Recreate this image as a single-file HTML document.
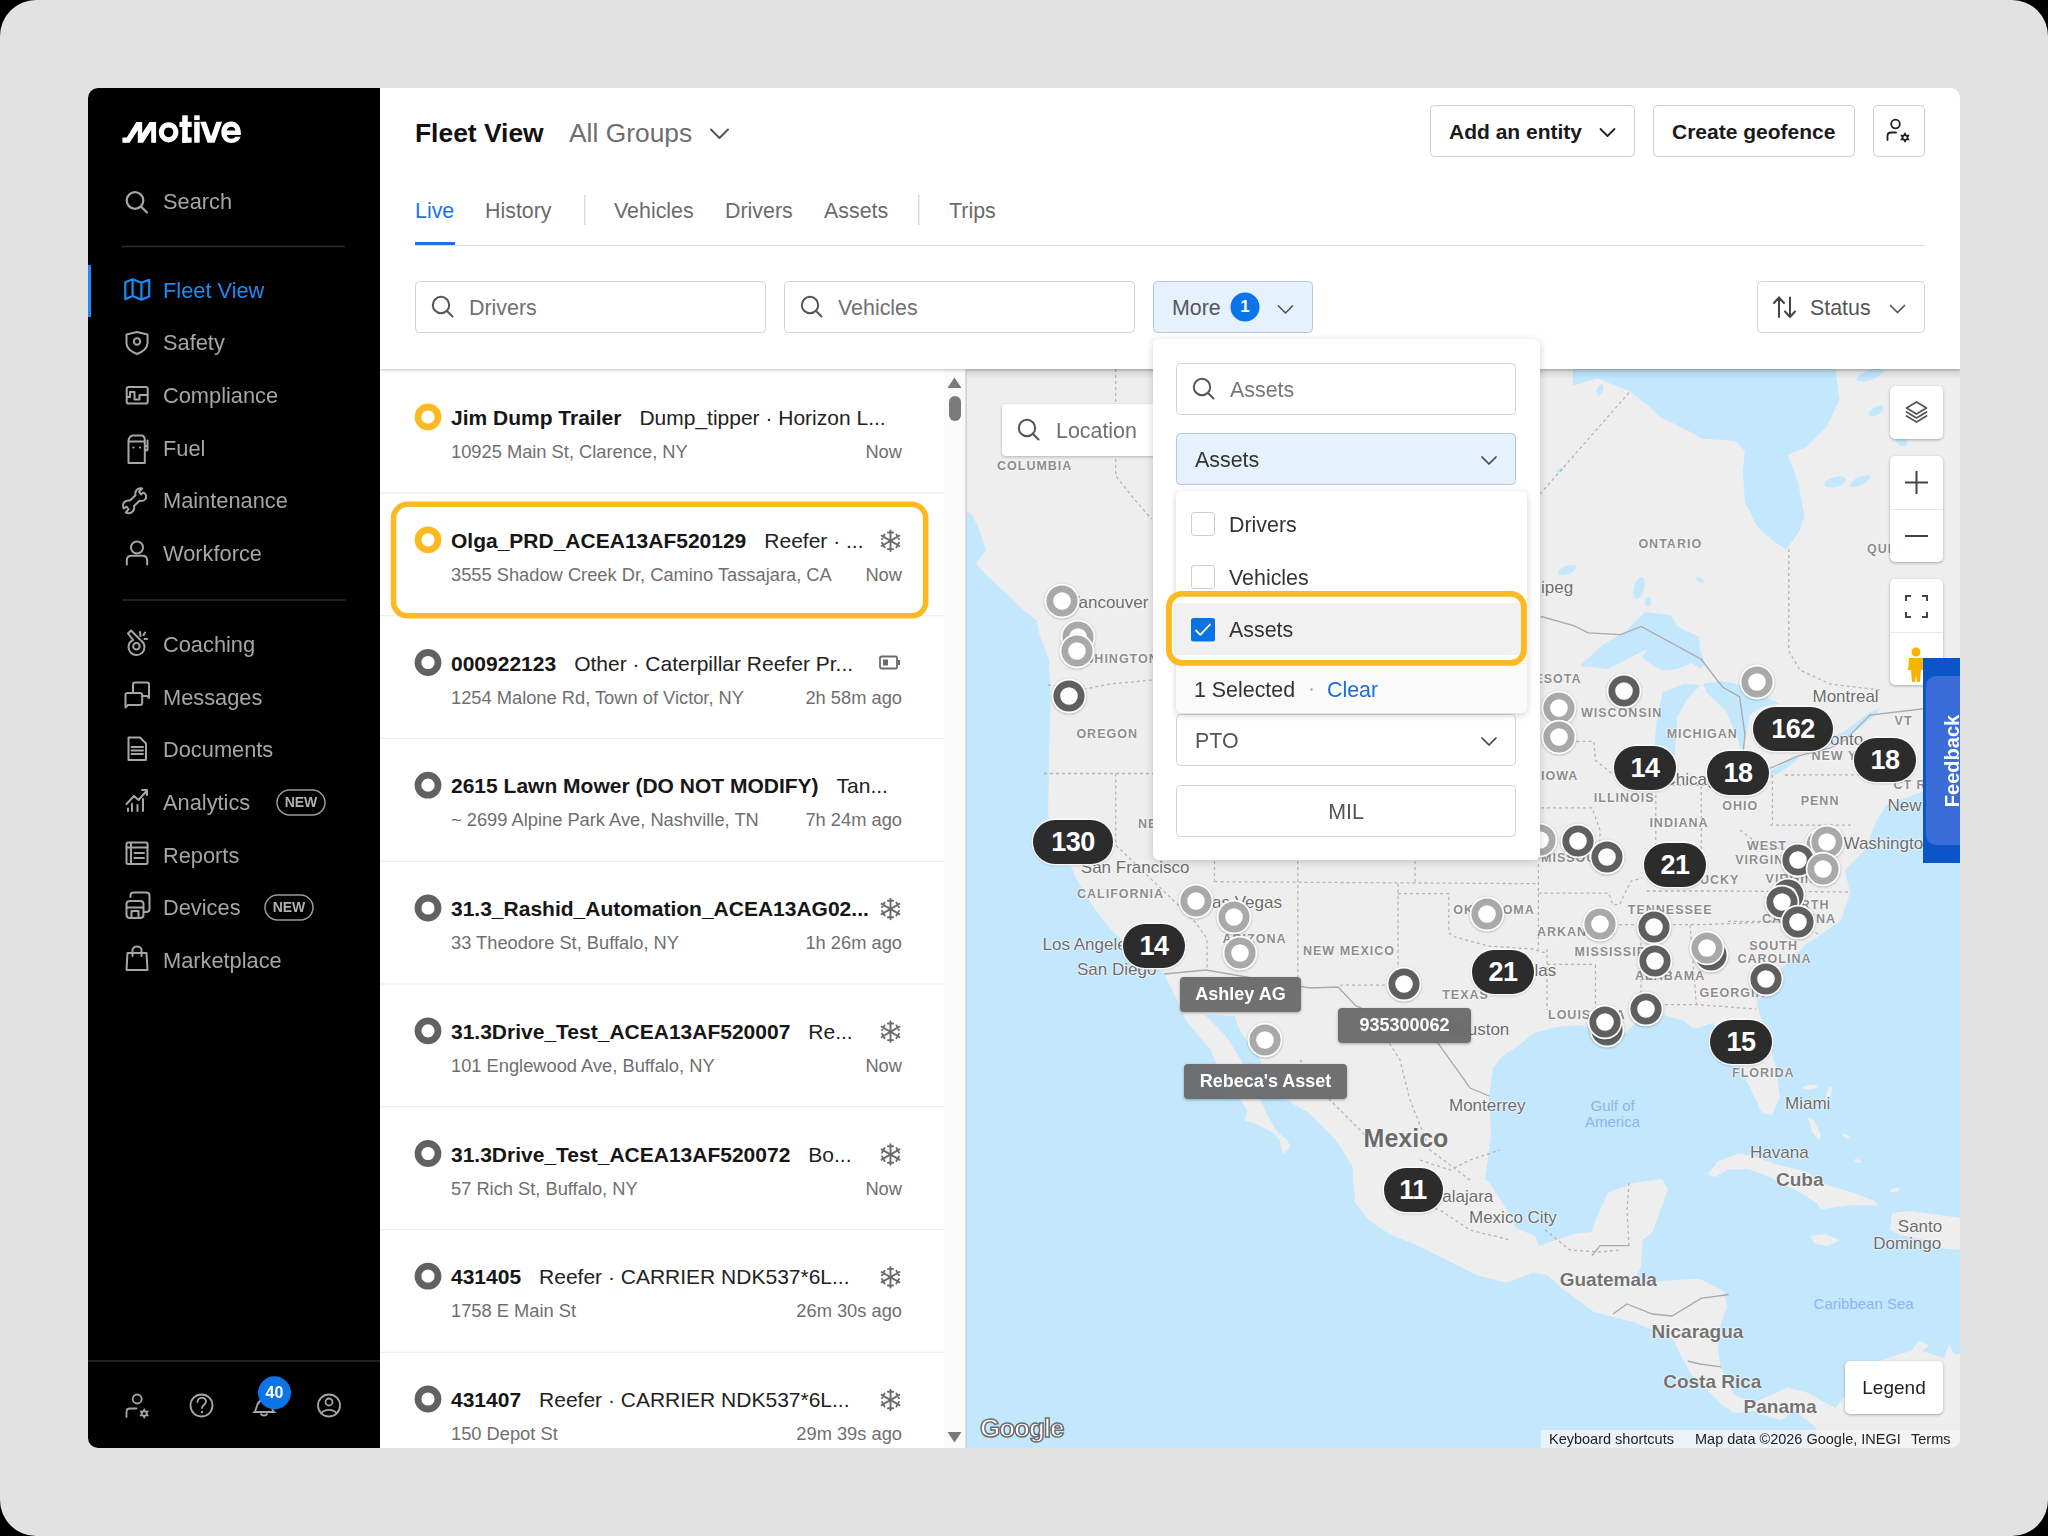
<!DOCTYPE html>
<html><head><meta charset="utf-8"><title>Fleet View</title>
<style>
html,body{margin:0;padding:0;width:2048px;height:1536px;overflow:hidden;background:#000;font-family:"Liberation Sans",sans-serif;}
.abs{position:absolute;}
#outer{position:absolute;left:0;top:0;width:2048px;height:1536px;background:#e2e2e2;border-radius:36px;}
#win{position:absolute;left:0;top:0;width:2048px;height:1536px;clip-path:inset(88px 88px 88px 88px round 10px);}
.navt{font-size:21.8px;color:#a6a6a6;line-height:28px;white-space:nowrap;}
.navt.act{color:#1a8cf5;}
.newb{height:25px;text-align:center;font:bold 14px "Liberation Sans",sans-serif;line-height:25px;color:#b0b0b0;}
.badge40{left:258px;top:1380px;width:33px;text-align:center;font:bold 16px "Liberation Sans",sans-serif;color:#fff;line-height:26px;}
.t26b{font:bold 26.4px "Liberation Sans",sans-serif;color:#111;line-height:34px;white-space:nowrap;}
.t26{font:26.4px "Liberation Sans",sans-serif;line-height:34px;white-space:nowrap;}
.t20{font:21.4px "Liberation Sans",sans-serif;line-height:26px;white-space:nowrap;}
.t20b{font:bold 21px "Liberation Sans",sans-serif;color:#1a1a1a;line-height:26px;white-space:nowrap;}
.ltitle{z-index:3;font:bold 21px "Liberation Sans",sans-serif;color:#161616;line-height:26px;white-space:nowrap;}
.lsub{font-weight:normal;color:#222;margin-left:18px;}
.laddr{z-index:3;font:18.3px "Liberation Sans",sans-serif;color:#6f6f6f;line-height:24px;white-space:nowrap;}
.ml{white-space:nowrap;color:#6e6e6e;text-shadow:0 0 2px #fff,0 0 2px #fff,0 0 1px #fff;}
.ml.st{font:bold 12.5px "Liberation Sans",sans-serif;line-height:1;letter-spacing:1px;color:#8c8c8c;}
.ml.ct{font:17px "Liberation Sans",sans-serif;line-height:1;color:#6b6b6b;}
.ml.ct2{font:bold 19px "Liberation Sans",sans-serif;line-height:1;color:#737373;}
.ml.big{font:bold 25px "Liberation Sans",sans-serif;line-height:1;color:#6a6a6a;}
.ml.wt{font:15px "Liberation Sans",sans-serif;line-height:1;color:#8fb3ee;text-shadow:none;}
.clus{height:44px;border-radius:22px;background:#2c2c2c;color:#fff;text-align:center;font:bold 27px "Liberation Sans",sans-serif;line-height:44px;box-shadow:0 0 0 1.5px rgba(255,255,255,0.9),0 1px 3px rgba(0,0,0,0.4);letter-spacing:-0.5px;}
.mctl{background:#fff;border-radius:5px;box-shadow:0 1px 3px rgba(0,0,0,0.3);z-index:10;}
.tip{height:35px;border-radius:4px;background:rgba(95,95,95,0.88);backdrop-filter:blur(6px);-webkit-backdrop-filter:blur(6px);color:#fff;text-align:center;font:bold 18px "Liberation Sans",sans-serif;line-height:35px;z-index:9;box-shadow:0 1px 3px rgba(0,0,0,0.3);}
.attr{font:14.5px "Liberation Sans",sans-serif;color:#222;line-height:18px;z-index:12;white-space:nowrap;}

</style></head>
<body>
<div id="outer"></div>
<div id="win">
<div class="abs" style="left:88px;top:88px;width:1872px;height:1360px;background:#fff"></div>
<div class="abs" style="left:88px;top:88px;width:292px;height:1360px;background:#000;z-index:30"></div>
<div class="abs" style="left:0;top:0;width:2048px;height:1536px;z-index:31">
<!-- SIDEBAR -->
<div id="sb">
  <svg class="abs" style="left:88px;top:88px" width="292" height="1360" viewBox="88 88 292 1360">
    <!-- logo -->
    <g fill="#fff">
      <path d="M122.4 137.6 L126.8 137.6 L136.3 122 L142.2 122 L142.2 133.3 L149.5 122 L156.1 122 L156.1 142.8 L151.2 142.8 L151.2 130 L143.1 142.8 L137.8 142.8 L137.8 130.2 L129.5 142.8 L122.4 142.8 Z"/>
      <path fill-rule="evenodd" d="M168.6 122.2 a9.8 10.1 0 1 0 0.01 0 Z M168.6 127.4 a4.7 4.9 0 1 1 -0.01 0 Z"/>
      <rect x="182.2" y="115.3" width="5.6" height="27.4"/>
      <rect x="179.4" y="121.8" width="12.3" height="5.2"/>
      <rect x="182.2" y="137.4" width="9.5" height="5.3"/>
      <rect x="194.2" y="115.3" width="5.5" height="4.8"/>
      <rect x="194.2" y="121.8" width="5.5" height="20.9"/>
      <path d="M200.1 121.8 L206 121.8 L211.1 136.4 L216.2 121.8 L222.1 121.8 L214.6 142.7 L207.6 142.7 Z"/>
      <path d="M240.9 133.8 C240.9 126.3 237 121.6 231.2 121.6 C225.4 121.6 221.3 126.3 221.3 132.3 C221.3 138.5 225.5 143 231.4 143 C236 143 239.4 140.6 240.6 136.8 L235.3 136.8 C234.5 138.2 233.2 138.7 231.5 138.7 C229 138.7 227.1 137.2 226.7 134.9 L240.8 134.9 Z M226.8 130.6 C227.3 128.3 229 126.7 231.2 126.7 C233.5 126.7 235.1 128.2 235.5 130.6 Z"/>
    </g>
    <!-- search -->
    <g fill="none" stroke="#a6a6a6" stroke-width="2.2" stroke-linecap="round">
      <circle cx="135" cy="200.5" r="8.3"/>
      <path d="M141 206.5 L147 212.5"/>
    </g>
    <line x1="122" y1="246.5" x2="345" y2="246.5" stroke="#2e2e2e" stroke-width="1.5"/>
    <rect x="88" y="265" width="3" height="52" fill="#1a8cf5"/>
    <!-- fleet view map icon -->
    <g fill="none" stroke="#1a8cf5" stroke-width="2.2" stroke-linejoin="round">
      <path d="M125.3 282.2 L132.6 279.3 L141.4 282.7 L149.2 279.8 L149.2 296.4 L141.4 299.8 L132.6 295.9 L125.3 299.3 Z M132.6 279.3 L132.6 295.9 M141.4 282.7 L141.4 299.8"/>
    </g>
    <g fill="none" stroke="#a6a6a6" stroke-width="2" stroke-linejoin="round" stroke-linecap="round">
      <!-- safety -->
      <path d="M137 332 L126.5 334.5 L126.5 343.2 C126.5 348 131 351.5 137 354 C143 351.5 147.5 348 147.5 343.2 L147.5 334.5 Z"/>
      <circle cx="137" cy="341.5" r="3.2"/>
      <!-- compliance -->
      <rect x="126.7" y="387" width="21" height="16.5" rx="1.8"/>
      <path d="M127 397 L130 397 L130 392 L134.5 392 L134.5 399.5 L139.5 399.5 L139.5 395 L147.5 395"/>
      <!-- fuel -->
      <path d="M128.5 463 L128.5 441 C128.5 439 130 435.5 133 435.5 L141 435.5 C143.5 435.5 144.8 437.5 144.8 440 L144.8 463 Z M128.5 441.5 L144.8 441.5 M144.8 446 L147.5 446 L147.5 440.5 M147.5 446 L147.5 450 L144.8 451"/>
      <!-- maintenance wrench -->
      <path d="M142.3 488.5 L139 491.5 L141 494.5 L143.5 492.5 C146 494 147 497 145.5 499 C144 501 141 501 139.5 500.8 L134 506 C134.5 508 133.5 511 131.5 512.5 C129.5 513.5 127 513 125.8 512.5 L128.5 509.3 L126.5 506.5 L123.8 508.5 C122.5 506.5 123 503.5 124.5 502 C126 500.5 128.5 500.3 130 500.5 L135.5 495.3 C135 493.3 135.8 490.5 137.8 489 C139.3 488 141.3 488.2 142.3 488.5 Z"/>
      <!-- workforce -->
      <circle cx="137" cy="547.5" r="6"/>
      <path d="M126.8 564.5 L126.8 560.5 C126.8 557.5 128.8 555.8 131.5 555.8 L142.5 555.8 C145.3 555.8 147.2 557.5 147.2 560.5 L147.2 564.5"/>
      <!-- coaching whistle -->
      <path d="M128 633.5 L131 630.5 L141 640.5 C143.5 642.5 144.5 645 144.5 647 C144.5 652 140.5 655 136.5 655 C132 655 128.5 651.5 128.5 647 C128.5 644 130 641.5 133.2 640 Z"/>
      <circle cx="136.4" cy="646.2" r="3.3"/>
      <path d="M140 632 L140.5 636 M143.5 635 L145 632.5 M144.5 639 L147 639"/>
      <!-- messages -->
      <path d="M133 693 L133 684.5 C133 683.5 133.8 682.5 135 682.5 L147 682.5 C148.2 682.5 149 683.5 149 684.5 L149 698 L147 696 L142 696"/>
      <path d="M125.5 707.5 L125.5 695 C125.5 693.7 126.3 693 127.5 693 L140 693 C141.3 693 142.2 694 142.2 695 L142.2 703 C142.2 704.3 141.3 705 140 705 L128 705 Z"/>
      <!-- documents -->
      <path d="M128.5 737.5 L140 737.5 L146 743.5 L146 760 L128.5 760 Z M131.5 747 L143 747 M131.5 750.5 L143 750.5 M131.5 754 L143 754"/>
      <!-- analytics -->
      <path d="M126.5 804 L134 796 L138.5 800 L147 790.5 M142 790 L147 790 L147 795 M128 808.5 L128 811 M132 804 L132 811 M137.5 805 L137.5 811 M143 799 L143 811"/>
      <!-- reports -->
      <rect x="126.5" y="842.5" width="21" height="21.5" rx="1.5"/>
      <path d="M126.5 847.5 L147.5 847.5 M131 842.5 L131 864 M134.5 853 L144 853 M134.5 858 L144 858"/>
      <!-- devices -->
      <path d="M130.5 897 L130.5 895.5 C130.5 893.5 131.5 892.5 133.5 892.5 L146 892.5 C148 892.5 149.5 893.5 149.5 895.5 L149.5 909 C149.5 911 148 912 146 912 L144 912"/>
      <path d="M126.5 904 C126.5 902 128 901 130 901 L140 901 C142 901 143.5 902 143.5 904 L143.5 915 C143.5 917 142 918 140 918 L130 918 C128 918 126.5 917 126.5 915 Z M126.5 907.5 L143.5 907.5 M131.5 911 L138.5 911 L138.5 918 L131.5 918 Z"/>
      <!-- marketplace bag -->
      <path d="M127.5 953 L146.5 953 L147.5 970 L126.5 970 Z M132.5 956 L132.5 950 C132.5 948 134.5 946.5 137 946.5 C139.5 946.5 141.5 948 141.5 950 L141.5 956"/>
    </g>
    <line x1="122" y1="600" x2="345" y2="600" stroke="#2e2e2e" stroke-width="1.5"/>
    <!-- NEW badges -->
    <rect x="277" y="790" width="48" height="25" rx="12.5" fill="none" stroke="#9a9a9a" stroke-width="1.5"/>
    <rect x="265" y="895" width="48" height="25" rx="12.5" fill="none" stroke="#9a9a9a" stroke-width="1.5"/>
    <line x1="88" y1="1361" x2="380" y2="1361" stroke="#2e2e2e" stroke-width="1.5"/>
    <!-- bottom icons -->
    <g fill="none" stroke="#a6a6a6" stroke-width="1.8" stroke-linecap="round">
      <circle cx="137.2" cy="1399" r="4.5"/>
      <path d="M126.5 1417 L126.5 1412 C126.5 1410 127.5 1408.5 130 1408.5 L136.5 1408.5"/>

      <circle cx="201.5" cy="1405.5" r="11"/>
      <path d="M197.5 1402 C197.5 1399.5 199.5 1397.8 201.8 1397.8 C204.3 1397.8 206 1399.5 206 1401.7 C206 1404.5 202 1405 202 1408"/>
      <circle cx="329" cy="1405.5" r="11"/>
      <circle cx="329" cy="1402" r="3.5"/>
      <path d="M321.5 1413 C323.5 1410.5 326 1409.8 329 1409.8 C332 1409.8 334.5 1410.5 336.5 1413"/>
      <path d="M254.5 1412 C257 1410 256 1400 264 1399 C272 1400 271 1410 274 1412 Z M261 1414 C262 1416 266 1416 267 1414"/>
    </g>
    <circle cx="202" cy="1412" r="1.2" fill="#a6a6a6"/>
    <g transform="translate(144.2,1413.5)" fill="#a6a6a6">
      <path d="M0 -5.5 L1.6 -2.8 L4.8 -2.8 L3.2 0 L4.8 2.8 L1.6 2.8 L0 5.5 L-1.6 2.8 L-4.8 2.8 L-3.2 0 L-4.8 -2.8 L-1.6 -2.8 Z"/>
      <circle cx="0" cy="0" r="1.5" fill="#000"/>
    </g>
    <circle cx="133.4" cy="447.5" r="1.1" fill="#a6a6a6"/><circle cx="140" cy="447.5" r="1.1" fill="#a6a6a6"/>
    <circle cx="274.5" cy="1392.8" r="16.5" fill="#0a74e8"/>
  </svg>
  <div class="abs logo" style="display:none"></div>
  <div class="abs navt" style="left:163px;top:188px;">Search</div>
  <div class="abs navt act" style="left:163px;top:277px;">Fleet View</div>
  <div class="abs navt" style="left:163px;top:329px;">Safety</div>
  <div class="abs navt" style="left:163px;top:382px;">Compliance</div>
  <div class="abs navt" style="left:163px;top:435px;">Fuel</div>
  <div class="abs navt" style="left:163px;top:487px;">Maintenance</div>
  <div class="abs navt" style="left:163px;top:540px;">Workforce</div>
  <div class="abs navt" style="left:163px;top:631px;">Coaching</div>
  <div class="abs navt" style="left:163px;top:684px;">Messages</div>
  <div class="abs navt" style="left:163px;top:736px;">Documents</div>
  <div class="abs navt" style="left:163px;top:789px;">Analytics</div>
  <div class="abs navt" style="left:163px;top:842px;">Reports</div>
  <div class="abs navt" style="left:163px;top:894px;">Devices</div>
  <div class="abs navt" style="left:163px;top:947px;">Marketplace</div>
  <div class="abs newb" style="left:277px;top:790px;width:48px;">NEW</div>
  <div class="abs newb" style="left:265px;top:895px;width:48px;">NEW</div>
  <div class="abs badge40">40</div>
</div>

</div>
<!-- MAIN HEADER -->
<div class="abs" style="left:380px;top:88px;width:1580px;height:281px;background:#fff;z-index:5;box-shadow:0 1px 3px rgba(0,0,0,0.25);"></div>
<div class="abs" style="left:380px;top:88px;width:1580px;height:281px;z-index:6;">
</div>
<div class="abs t26b" style="left:415px;top:116px;z-index:7;">Fleet View</div>
<div class="abs t26" style="left:569px;top:116px;z-index:7;color:#6e6e6e;">All Groups</div>
<svg class="abs" style="left:0;top:0;z-index:7" width="2048" height="380" viewBox="0 0 2048 380">

  <!-- tabs -->
  <rect x="415" y="242" width="40" height="3" fill="#1a73e8"/>
  <rect x="415" y="245" width="1510" height="1" fill="#dedede"/>
  <rect x="584" y="195" width="1.5" height="30" fill="#dcdcdc"/>
  <rect x="918" y="195" width="1.5" height="30" fill="#dcdcdc"/>
  <!-- buttons -->
  <rect x="1430.5" y="105.5" width="204" height="51" rx="4" fill="#fff" stroke="#cfcfcf"/>
  <rect x="1653.5" y="105.5" width="201" height="51" rx="4" fill="#fff" stroke="#cfcfcf"/>
  <rect x="1873.5" y="105.5" width="51" height="51" rx="4" fill="#fff" stroke="#cfcfcf"/>
  <g fill="none" stroke="#222" stroke-width="1.8" stroke-linecap="round">
    <circle cx="1895.5" cy="124" r="4.3"/>
    <path d="M1887.5 140 L1887.5 136 C1887.5 134 1889 132.5 1891 132.5 L1896 132.5"/>
  </g>
  <g transform="translate(1905,137.5)" fill="#222">
    <path d="M0 -5.5 L1.6 -2.8 L4.8 -2.8 L3.2 0 L4.8 2.8 L1.6 2.8 L0 5.5 L-1.6 2.8 L-4.8 2.8 L-3.2 0 L-4.8 -2.8 L-1.6 -2.8 Z"/>
    <circle cx="0" cy="0" r="1.5" fill="#fff"/>
  </g>
  <!-- inputs -->
  <rect x="415.5" y="281.5" width="350" height="51" rx="4" fill="#fff" stroke="#d2d2d2"/>
  <rect x="784.5" y="281.5" width="350" height="51" rx="4" fill="#fff" stroke="#d2d2d2"/>
  <rect x="1153.5" y="281.5" width="159" height="51" rx="4" fill="#e5f2fd" stroke="#b4c6d8"/>
  <rect x="1757.5" y="281.5" width="167" height="51" rx="4" fill="#fff" stroke="#d2d2d2"/>
  <g fill="none" stroke="#555" stroke-width="2" stroke-linecap="round">
    <circle cx="441" cy="305" r="8.2"/><path d="M447 311 L452.5 316.5"/>
    <circle cx="810" cy="305" r="8.2"/><path d="M816 311 L821.5 316.5"/>
    <path d="M1779 298 L1779 317 M1774 303 L1779 297.5 L1784 303 M1790 297.5 L1790 317 M1785 311.5 L1790 317 L1795 311.5" stroke="#444"/>
  </g>
  <circle cx="1245" cy="307" r="14.5" fill="#0a74e8"/>
  <g fill="none" stroke="#555" stroke-width="2" stroke-linecap="round" stroke-linejoin="round">
    <path d="M711 129.5 L719.5 138 L728 129.5"/>
    <path d="M1600.5 129 L1607.5 136 L1614.5 129" stroke="#222" stroke-width="1.8"/>
    <path d="M1278.5 306 L1285.5 313 L1292.5 306" stroke="#555" stroke-width="1.7"/>
    <path d="M1890.5 305.5 L1897.5 312.5 L1904.5 305.5" stroke="#555" stroke-width="1.7"/>
  </g>
</svg>
<div class="abs t20" style="left:415px;top:198px;color:#1a73e8;z-index:7">Live</div>
<div class="abs t20" style="left:485px;top:198px;color:#6b6b6b;z-index:7">History</div>
<div class="abs t20" style="left:614px;top:198px;color:#6b6b6b;z-index:7">Vehicles</div>
<div class="abs t20" style="left:725px;top:198px;color:#6b6b6b;z-index:7">Drivers</div>
<div class="abs t20" style="left:824px;top:198px;color:#6b6b6b;z-index:7">Assets</div>
<div class="abs t20" style="left:949px;top:198px;color:#6b6b6b;z-index:7">Trips</div>
<div class="abs t20b" style="left:1449px;top:119px;z-index:7">Add an entity</div>
<div class="abs t20b" style="left:1672px;top:119px;z-index:7">Create geofence</div>
<div class="abs t20" style="left:469px;top:295px;color:#707070;z-index:7">Drivers</div>
<div class="abs t20" style="left:838px;top:295px;color:#707070;z-index:7">Vehicles</div>
<div class="abs t20" style="left:1172px;top:295px;color:#555;z-index:7">More</div>
<div class="abs" style="left:1230px;top:297px;width:30px;text-align:center;font:bold 17px 'Liberation Sans',sans-serif;line-height:20px;color:#fff;z-index:8">1</div>
<div class="abs t20" style="left:1810px;top:295px;color:#555;z-index:7">Status</div>

<div class="abs" style="left:380px;top:369px;width:586px;height:1079px;background:#fff;z-index:1"></div>
<svg class="abs" style="left:0;top:0;z-index:2" width="2048" height="1536" viewBox="0 0 2048 1536">
<circle cx="428" cy="417.0" r="10" fill="none" stroke="#fdb921" stroke-width="6.8"/>
<rect x="380" y="492.5" width="564" height="1" fill="#ececec"/>
<circle cx="428" cy="539.8" r="10" fill="none" stroke="#fdb921" stroke-width="6.8"/>
<rect x="380" y="615.2" width="564" height="1" fill="#ececec"/>
<g transform="translate(890.5,540.8)" fill="none" stroke="#6b6b6b" stroke-width="1.9" stroke-linecap="round"><g transform="rotate(0)"><path d="M0 -10.3 L0 10.3 M-2.6 -8.3 L2.6 -8.3 M-2.6 8.3 L2.6 8.3"/></g><g transform="rotate(60)"><path d="M0 -10.3 L0 10.3 M-2.6 -8.3 L2.6 -8.3 M-2.6 8.3 L2.6 8.3"/></g><g transform="rotate(120)"><path d="M0 -10.3 L0 10.3 M-2.6 -8.3 L2.6 -8.3 M-2.6 8.3 L2.6 8.3"/></g><circle r="1.8" fill="#6b6b6b" stroke="none"/></g>
<circle cx="428" cy="662.5" r="10" fill="none" stroke="#616161" stroke-width="6.8"/>
<rect x="380" y="738.0" width="564" height="1" fill="#ececec"/>
<g transform="translate(889,662.5)"><rect x="-9" y="-6" width="17" height="12" rx="1.5" fill="none" stroke="#6a6a6a" stroke-width="1.8"/><rect x="-6" y="-3" width="5" height="6" fill="#6a6a6a"/><rect x="9" y="-2.5" width="2" height="5" fill="#6a6a6a"/></g>
<circle cx="428" cy="785.2" r="10" fill="none" stroke="#616161" stroke-width="6.8"/>
<rect x="380" y="860.8" width="564" height="1" fill="#ececec"/>
<circle cx="428" cy="908.0" r="10" fill="none" stroke="#616161" stroke-width="6.8"/>
<rect x="380" y="983.5" width="564" height="1" fill="#ececec"/>
<g transform="translate(890.5,909.0)" fill="none" stroke="#6b6b6b" stroke-width="1.9" stroke-linecap="round"><g transform="rotate(0)"><path d="M0 -10.3 L0 10.3 M-2.6 -8.3 L2.6 -8.3 M-2.6 8.3 L2.6 8.3"/></g><g transform="rotate(60)"><path d="M0 -10.3 L0 10.3 M-2.6 -8.3 L2.6 -8.3 M-2.6 8.3 L2.6 8.3"/></g><g transform="rotate(120)"><path d="M0 -10.3 L0 10.3 M-2.6 -8.3 L2.6 -8.3 M-2.6 8.3 L2.6 8.3"/></g><circle r="1.8" fill="#6b6b6b" stroke="none"/></g>
<circle cx="428" cy="1030.8" r="10" fill="none" stroke="#616161" stroke-width="6.8"/>
<rect x="380" y="1106.2" width="564" height="1" fill="#ececec"/>
<g transform="translate(890.5,1031.8)" fill="none" stroke="#6b6b6b" stroke-width="1.9" stroke-linecap="round"><g transform="rotate(0)"><path d="M0 -10.3 L0 10.3 M-2.6 -8.3 L2.6 -8.3 M-2.6 8.3 L2.6 8.3"/></g><g transform="rotate(60)"><path d="M0 -10.3 L0 10.3 M-2.6 -8.3 L2.6 -8.3 M-2.6 8.3 L2.6 8.3"/></g><g transform="rotate(120)"><path d="M0 -10.3 L0 10.3 M-2.6 -8.3 L2.6 -8.3 M-2.6 8.3 L2.6 8.3"/></g><circle r="1.8" fill="#6b6b6b" stroke="none"/></g>
<circle cx="428" cy="1153.5" r="10" fill="none" stroke="#616161" stroke-width="6.8"/>
<rect x="380" y="1229.0" width="564" height="1" fill="#ececec"/>
<g transform="translate(890.5,1154.5)" fill="none" stroke="#6b6b6b" stroke-width="1.9" stroke-linecap="round"><g transform="rotate(0)"><path d="M0 -10.3 L0 10.3 M-2.6 -8.3 L2.6 -8.3 M-2.6 8.3 L2.6 8.3"/></g><g transform="rotate(60)"><path d="M0 -10.3 L0 10.3 M-2.6 -8.3 L2.6 -8.3 M-2.6 8.3 L2.6 8.3"/></g><g transform="rotate(120)"><path d="M0 -10.3 L0 10.3 M-2.6 -8.3 L2.6 -8.3 M-2.6 8.3 L2.6 8.3"/></g><circle r="1.8" fill="#6b6b6b" stroke="none"/></g>
<circle cx="428" cy="1276.2" r="10" fill="none" stroke="#616161" stroke-width="6.8"/>
<rect x="380" y="1351.8" width="564" height="1" fill="#ececec"/>
<g transform="translate(890.5,1277.2)" fill="none" stroke="#6b6b6b" stroke-width="1.9" stroke-linecap="round"><g transform="rotate(0)"><path d="M0 -10.3 L0 10.3 M-2.6 -8.3 L2.6 -8.3 M-2.6 8.3 L2.6 8.3"/></g><g transform="rotate(60)"><path d="M0 -10.3 L0 10.3 M-2.6 -8.3 L2.6 -8.3 M-2.6 8.3 L2.6 8.3"/></g><g transform="rotate(120)"><path d="M0 -10.3 L0 10.3 M-2.6 -8.3 L2.6 -8.3 M-2.6 8.3 L2.6 8.3"/></g><circle r="1.8" fill="#6b6b6b" stroke="none"/></g>
<circle cx="428" cy="1399.0" r="10" fill="none" stroke="#616161" stroke-width="6.8"/>
<rect x="380" y="1474.5" width="564" height="1" fill="#ececec"/>
<g transform="translate(890.5,1400.0)" fill="none" stroke="#6b6b6b" stroke-width="1.9" stroke-linecap="round"><g transform="rotate(0)"><path d="M0 -10.3 L0 10.3 M-2.6 -8.3 L2.6 -8.3 M-2.6 8.3 L2.6 8.3"/></g><g transform="rotate(60)"><path d="M0 -10.3 L0 10.3 M-2.6 -8.3 L2.6 -8.3 M-2.6 8.3 L2.6 8.3"/></g><g transform="rotate(120)"><path d="M0 -10.3 L0 10.3 M-2.6 -8.3 L2.6 -8.3 M-2.6 8.3 L2.6 8.3"/></g><circle r="1.8" fill="#6b6b6b" stroke="none"/></g>
</svg>
<div class="abs ltitle" style="left:451px;top:405.0px">Jim Dump Trailer<span class="lsub">Dump_tipper · Horizon L...</span></div>
<div class="abs laddr" style="left:451px;top:440.0px">10925 Main St, Clarence, NY</div>
<div class="abs laddr" style="right:1146px;top:440.0px;text-align:right">Now</div>
<div class="abs ltitle" style="left:451px;top:527.8px">Olga_PRD_ACEA13AF520129<span class="lsub">Reefer · ...</span></div>
<div class="abs laddr" style="left:451px;top:562.8px">3555 Shadow Creek Dr, Camino Tassajara, CA</div>
<div class="abs laddr" style="right:1146px;top:562.8px;text-align:right">Now</div>
<div class="abs ltitle" style="left:451px;top:650.5px">000922123<span class="lsub">Other · Caterpillar Reefer Pr...</span></div>
<div class="abs laddr" style="left:451px;top:685.5px">1254 Malone Rd, Town of Victor, NY</div>
<div class="abs laddr" style="right:1146px;top:685.5px;text-align:right">2h 58m ago</div>
<div class="abs ltitle" style="left:451px;top:773.2px">2615 Lawn Mower (DO NOT MODIFY)<span class="lsub">Tan...</span></div>
<div class="abs laddr" style="left:451px;top:808.2px">~ 2699 Alpine Park Ave, Nashville, TN</div>
<div class="abs laddr" style="right:1146px;top:808.2px;text-align:right">7h 24m ago</div>
<div class="abs ltitle" style="left:451px;top:896.0px">31.3_Rashid_Automation_ACEA13AG02...<span class="lsub"></span></div>
<div class="abs laddr" style="left:451px;top:931.0px">33 Theodore St, Buffalo, NY</div>
<div class="abs laddr" style="right:1146px;top:931.0px;text-align:right">1h 26m ago</div>
<div class="abs ltitle" style="left:451px;top:1018.8px">31.3Drive_Test_ACEA13AF520007<span class="lsub">Re...</span></div>
<div class="abs laddr" style="left:451px;top:1053.8px">101 Englewood Ave, Buffalo, NY</div>
<div class="abs laddr" style="right:1146px;top:1053.8px;text-align:right">Now</div>
<div class="abs ltitle" style="left:451px;top:1141.5px">31.3Drive_Test_ACEA13AF520072<span class="lsub">Bo...</span></div>
<div class="abs laddr" style="left:451px;top:1176.5px">57 Rich St, Buffalo, NY</div>
<div class="abs laddr" style="right:1146px;top:1176.5px;text-align:right">Now</div>
<div class="abs ltitle" style="left:451px;top:1264.2px">431405<span class="lsub">Reefer · CARRIER NDK537*6L...</span></div>
<div class="abs laddr" style="left:451px;top:1299.2px">1758 E Main St</div>
<div class="abs laddr" style="right:1146px;top:1299.2px;text-align:right">26m 30s ago</div>
<div class="abs ltitle" style="left:451px;top:1387.0px">431407<span class="lsub">Reefer · CARRIER NDK537*6L...</span></div>
<div class="abs laddr" style="left:451px;top:1422.0px">150 Depot St</div>
<div class="abs laddr" style="right:1146px;top:1422.0px;text-align:right">29m 39s ago</div>
<div class="abs" style="left:966px;top:369px;width:994px;height:1079px;overflow:hidden;z-index:1">
<svg class="abs" style="left:-966px;top:-369px" width="2048" height="1536" viewBox="0 0 2048 1536">
<rect x="966" y="369" width="994" height="1079" fill="#eeeeee"/>
<path d="M966.0 369.0 L966.0 1448.0 L1816.5 1448.0 L1816.5 1428.2 L1794.8 1410.6 L1781.2 1420.0 L1765.0 1416.0 L1754.0 1410.6 L1733.9 1413.3 L1721.0 1404.0 L1691.6 1374.6 L1683.7 1361.0 L1672.0 1337.5 L1633.0 1322.0 L1594.0 1312.0 L1564.6 1290.6 L1547.0 1275.0 L1533.0 1273.0 L1506.0 1282.8 L1476.7 1275.0 L1449.0 1261.0 L1418.0 1245.7 L1389.0 1234.0 L1369.0 1220.0 L1353.7 1200.8 L1355.0 1199.0 L1352.0 1165.0 L1336.2 1141.0 L1322.0 1126.0 L1307.6 1112.0 L1293.3 1104.0 L1280.0 1095.0 L1267.5 1080.0 L1258.9 1057.4 L1244.6 1037.4 L1238.8 1028.8 L1234.5 1015.9 L1204.4 1014.4 L1210.2 1020.2 L1224.5 1034.5 L1236.0 1051.7 L1247.4 1071.7 L1258.9 1097.5 L1264.6 1109.0 L1270.3 1120.5 L1276.0 1130.5 L1287.5 1140.5 L1290.4 1146.2 L1283.2 1154.8 L1279.0 1139.0 L1271.8 1132.0 L1257.4 1124.8 L1244.6 1120.5 L1247.4 1110.4 L1238.8 1097.5 L1226.0 1078.0 L1214.5 1060.3 L1210.2 1048.8 L1197.3 1034.5 L1185.8 1020.0 L1178.7 1003.0 L1171.5 988.7 L1164.3 974.3 L1149.0 962.0 L1126.0 944.0 L1107.7 926.0 L1092.0 905.0 L1076.5 879.0 L1066.0 855.6 L1060.0 835.0 L1048.0 825.0 L1049.0 760.0 L1050.6 700.0 L1049.0 660.0 L1039.0 633.0 L1037.0 621.0 L1022.0 609.0 L1005.0 592.0 L986.0 575.0 L976.0 563.5 L986.0 550.0 L979.5 531.0 L973.0 516.0 L966.0 511.0 Z" fill="#c3e7fd"/>
<path d="M1485.0 1180.0 L1491.0 1136.0 L1489.0 1097.0 L1493.0 1068.0 L1502.5 1056.0 L1518.0 1046.0 L1534.0 1033.0 L1557.0 1027.0 L1580.6 1025.0 L1588.0 1027.0 L1606.0 1035.0 L1625.5 1033.0 L1635.0 1023.0 L1664.6 1015.0 L1684.0 1021.0 L1694.0 1029.0 L1713.0 1023.0 L1727.0 1038.6 L1737.0 1058.0 L1744.7 1077.6 L1752.5 1093.0 L1762.0 1113.0 L1772.0 1115.0 L1780.0 1097.0 L1776.0 1068.0 L1768.0 1038.6 L1758.0 1009.0 L1756.0 990.0 L1758.6 1000.0 L1782.0 968.0 L1805.5 944.7 L1840.6 921.0 L1850.0 893.0 L1845.0 870.0 L1864.0 851.0 L1878.0 818.0 L1887.5 804.0 L1922.7 792.0 L1960.0 780.0 L1960.0 1353.7 L1954.6 1355.0 L1949.2 1344.3 L1943.7 1357.8 L1922.0 1351.0 L1928.8 1345.6 L1919.4 1340.2 L1911.2 1351.0 L1896.3 1355.0 L1876.0 1361.9 L1855.7 1389.0 L1845.0 1395.7 L1835.4 1408.0 L1824.6 1402.5 L1808.3 1393.0 L1788.0 1387.6 L1754.0 1402.5 L1733.9 1395.0 L1720.3 1366.0 L1717.6 1348.3 L1721.7 1321.2 L1727.0 1307.7 L1724.4 1291.5 L1700.0 1279.0 L1691.6 1279.0 L1633.0 1283.0 L1640.8 1267.0 L1642.7 1240.0 L1652.5 1232.0 L1668.0 1189.0 L1662.0 1179.0 L1633.0 1183.0 L1607.6 1193.0 L1594.0 1224.0 L1592.0 1232.0 L1574.0 1234.0 L1539.0 1245.7 L1535.0 1236.0 L1515.8 1228.0 L1506.0 1208.6 L1488.4 1181.0 Z" fill="#c3e7fd"/>
<path d="M1572.8 369.0 L1572.8 385.4 L1597.4 378.2 L1630.0 391.6 L1650.7 408.0 L1659.0 416.0 L1687.7 430.5 L1702.0 438.7 L1734.8 440.8 L1745.0 451.0 L1743.0 471.5 L1745.0 502.3 L1757.4 527.0 L1773.8 541.3 L1786.0 549.5 L1798.4 533.0 L1804.6 516.7 L1798.4 484.0 L1788.0 455.0 L1806.6 447.0 L1827.0 426.4 L1839.4 399.8 L1835.3 369.0 Z" fill="#c3e7fd"/>
<path d="M1580.5 664.7 L1604.0 644.0 L1626.0 631.0 L1645.0 612.0 L1671.0 615.0 L1677.0 626.6 L1699.0 637.0 L1700.6 651.5 L1705.0 663.0 L1700.6 669.0 L1692.0 663.0 L1677.0 669.0 L1662.5 670.6 L1653.7 666.0 L1642.0 657.0 L1648.0 648.6 L1633.0 656.0 L1608.0 669.0 L1580.5 666.0 Z" fill="#c3e7fd"/>
<path d="M1662.5 692.5 L1684.5 683.7 L1700.6 685.0 L1687.4 698.4 L1677.0 717.4 L1675.7 743.8 L1674.0 766.0 L1662.5 766.0 L1653.7 751.0 L1656.7 722.0 Z" fill="#c3e7fd"/>
<path d="M1703.5 683.7 L1721.0 681.0 L1736.0 683.7 L1757.7 692.5 L1779.7 704.0 L1762.0 707.0 L1750.0 714.5 L1744.6 743.8 L1741.6 751.0 L1737.0 736.5 L1725.5 710.0 L1706.5 692.5 Z" fill="#c3e7fd"/>
<path d="M1769.5 771.6 L1794.0 755.5 L1798.8 758.5 L1779.7 773.0 L1769.5 777.5 L1745.0 790.0 L1742.0 786.0 Z" fill="#c3e7fd"/>
<path d="M1800.0 748.0 L1820.0 738.0 L1842.0 733.0 L1845.0 738.0 L1825.0 748.0 L1805.0 753.0 Z" fill="#c3e7fd"/>
<path d="M1842.0 733.0 L1870.0 712.0 L1880.0 708.0 L1876.0 714.0 L1848.0 738.0 Z" fill="#c3e7fd"/>
<path d="M1707.4 1174.4 L1717.7 1161.4 L1738.4 1153.6 L1754.0 1156.2 L1774.7 1164.0 L1805.8 1171.8 L1826.5 1184.7 L1852.4 1192.5 L1873.2 1200.3 L1878.3 1205.4 L1847.3 1205.4 L1821.3 1209.3 L1816.2 1202.8 L1795.4 1189.9 L1769.5 1176.9 L1748.8 1169.2 L1728.1 1169.2 L1715.1 1176.9 Z" fill="#eeeeee"/>
<path d="M1892.0 1213.0 L1910.0 1211.0 L1940.0 1215.0 L1960.0 1218.0 L1960.0 1250.0 L1940.0 1248.0 L1925.0 1240.0 L1900.0 1235.0 L1890.0 1230.0 Z" fill="#eeeeee"/>
<path d="M1810.0 1236.0 L1825.0 1234.0 L1840.0 1240.0 L1828.0 1246.0 L1815.0 1244.0 Z" fill="#eeeeee"/>
<path d="M1808.0 1117.0 L1814.0 1120.0 L1821.0 1135.0 L1819.0 1140.0 L1812.0 1132.0 Z" fill="#eeeeee"/>
<ellipse cx="1639" cy="588" rx="5" ry="11" transform="rotate(15 1639 588)" fill="#c3e7fd"/>
<ellipse cx="1567" cy="570" rx="10" ry="4" transform="rotate(-20 1567 570)" fill="#c3e7fd"/>
<ellipse cx="1835" cy="482" rx="11" ry="5" transform="rotate(-15 1835 482)" fill="#c3e7fd"/>
<ellipse cx="1860" cy="481" rx="11" ry="4" transform="rotate(-25 1860 481)" fill="#c3e7fd"/>
<ellipse cx="1876" cy="411" rx="8" ry="4" transform="rotate(-30 1876 411)" fill="#c3e7fd"/>
<ellipse cx="1902" cy="442" rx="6" ry="4" transform="rotate(20 1902 442)" fill="#c3e7fd"/>
<ellipse cx="1870" cy="375" rx="14" ry="5" transform="rotate(-20 1870 375)" fill="#c3e7fd"/>
<ellipse cx="1648" cy="602" rx="3" ry="5" transform="rotate(0 1648 602)" fill="#c3e7fd"/>
<ellipse cx="1930" cy="480" rx="5" ry="3" transform="rotate(30 1930 480)" fill="#c3e7fd"/>
<ellipse cx="1600" cy="390" rx="3" ry="6" transform="rotate(20 1600 390)" fill="#c3e7fd"/>
<ellipse cx="1700" cy="580" rx="4" ry="2" transform="rotate(30 1700 580)" fill="#c3e7fd"/>
<ellipse cx="1560" cy="470" rx="4" ry="2" transform="rotate(-20 1560 470)" fill="#c3e7fd"/>
<ellipse cx="1810" cy="1087" rx="8" ry="2.2" transform="rotate(-5 1810 1087)" fill="#eeeeee"/>
<ellipse cx="1829" cy="1093" rx="2.5" ry="7" transform="rotate(15 1829 1093)" fill="#eeeeee"/>
<ellipse cx="1846" cy="1136" rx="4" ry="1.5" transform="rotate(30 1846 1136)" fill="#eeeeee"/>
<ellipse cx="1858" cy="1161" rx="4" ry="1.5" transform="rotate(20 1858 1161)" fill="#eeeeee"/>
<ellipse cx="1895" cy="1190" rx="5" ry="2" transform="rotate(-10 1895 1190)" fill="#eeeeee"/>
<path d="M1115.7 369.0 L1115.7 476.0 L1135.0 500.0 L1151.5 519.0" fill="none" stroke="#b4b4b4" stroke-width="1.3" stroke-dasharray="3 3"/>
<path d="M1048.0 685.0 L1080.0 690.0 L1110.0 684.0 L1153.0 680.0" fill="none" stroke="#b4b4b4" stroke-width="1.3" stroke-dasharray="3 3"/>
<path d="M1044.0 773.5 L1153.0 773.5" fill="none" stroke="#b4b4b4" stroke-width="1.3" stroke-dasharray="3 3"/>
<path d="M1115.7 773.5 L1115.7 845.0 L1175.0 902.0 L1196.0 923.0 L1207.0 939.0 L1207.0 970.0" fill="none" stroke="#b4b4b4" stroke-width="1.3" stroke-dasharray="3 3"/>
<path d="M1214.5 861.0 L1214.5 881.7" fill="none" stroke="#b4b4b4" stroke-width="1.3" stroke-dasharray="3 3"/>
<path d="M1214.5 881.7 L1538.0 883.7" fill="none" stroke="#b4b4b4" stroke-width="1.3" stroke-dasharray="3 3"/>
<path d="M1297.8 861.0 L1297.8 989.0" fill="none" stroke="#b4b4b4" stroke-width="1.3" stroke-dasharray="3 3"/>
<path d="M1415.0 861.0 L1415.0 881.7" fill="none" stroke="#b4b4b4" stroke-width="1.3" stroke-dasharray="3 3"/>
<path d="M1398.0 883.7 L1398.0 985.2" fill="none" stroke="#b4b4b4" stroke-width="1.3" stroke-dasharray="3 3"/>
<path d="M1340.0 985.2 L1404.0 985.2" fill="none" stroke="#b4b4b4" stroke-width="1.3" stroke-dasharray="3 3"/>
<path d="M1398.0 893.7 L1448.8 893.7 L1448.8 932.8 L1455.0 937.0 L1488.6 946.0 L1532.5 949.0 L1547.0 953.3" fill="none" stroke="#b4b4b4" stroke-width="1.3" stroke-dasharray="3 3"/>
<path d="M1538.4 864.0 L1538.4 949.0" fill="none" stroke="#b4b4b4" stroke-width="1.3" stroke-dasharray="3 3"/>
<path d="M1538.4 893.2 L1608.7 893.2 L1613.0 905.0 L1620.0 904.0 L1625.0 893.0 L1631.0 881.0 L1642.0 878.0" fill="none" stroke="#b4b4b4" stroke-width="1.3" stroke-dasharray="3 3"/>
<path d="M1646.8 891.0 L1730.0 891.0 L1850.0 892.0" fill="none" stroke="#b4b4b4" stroke-width="1.3" stroke-dasharray="3 3"/>
<path d="M1619.0 924.7 L1700.0 924.7 L1790.0 921.3" fill="none" stroke="#b4b4b4" stroke-width="1.3" stroke-dasharray="3 3"/>
<path d="M1595.5 965.0 L1595.5 1016.0" fill="none" stroke="#b4b4b4" stroke-width="1.3" stroke-dasharray="3 3"/>
<path d="M1547.0 964.3 L1595.5 964.3" fill="none" stroke="#b4b4b4" stroke-width="1.3" stroke-dasharray="3 3"/>
<path d="M1547.0 949.0 L1547.0 1010.0" fill="none" stroke="#b4b4b4" stroke-width="1.3" stroke-dasharray="3 3"/>
<path d="M1641.0 924.7 L1641.0 1016.0" fill="none" stroke="#b4b4b4" stroke-width="1.3" stroke-dasharray="3 3"/>
<path d="M1690.0 924.7 L1696.0 1000.0 L1696.6 1004.6" fill="none" stroke="#b4b4b4" stroke-width="1.3" stroke-dasharray="3 3"/>
<path d="M1641.0 1004.6 L1696.6 1004.6 L1756.0 1009.0" fill="none" stroke="#b4b4b4" stroke-width="1.3" stroke-dasharray="3 3"/>
<path d="M1546.4 742.0 L1593.8 741.3 L1595.6 760.5 L1613.8 775.0" fill="none" stroke="#b4b4b4" stroke-width="1.3" stroke-dasharray="3 3"/>
<path d="M1541.0 807.9 L1592.0 807.9 L1600.0 830.0 L1600.0 849.0" fill="none" stroke="#b4b4b4" stroke-width="1.3" stroke-dasharray="3 3"/>
<path d="M1655.8 795.0 L1655.8 849.0" fill="none" stroke="#b4b4b4" stroke-width="1.3" stroke-dasharray="3 3"/>
<path d="M1701.3 786.0 L1701.3 849.0" fill="none" stroke="#b4b4b4" stroke-width="1.3" stroke-dasharray="3 3"/>
<path d="M1772.4 775.0 L1772.4 824.0" fill="none" stroke="#b4b4b4" stroke-width="1.3" stroke-dasharray="3 3"/>
<path d="M1672.0 785.0 L1756.0 785.0" fill="none" stroke="#b4b4b4" stroke-width="1.3" stroke-dasharray="3 3"/>
<path d="M1785.0 775.0 L1864.0 774.8" fill="none" stroke="#b4b4b4" stroke-width="1.3" stroke-dasharray="3 3"/>
<path d="M1770.0 825.2 L1852.0 825.2" fill="none" stroke="#b4b4b4" stroke-width="1.3" stroke-dasharray="3 3"/>
<path d="M1788.8 549.0 L1788.8 651.0 L1800.0 670.0 L1830.0 684.0 L1880.0 690.0" fill="none" stroke="#b4b4b4" stroke-width="1.3" stroke-dasharray="3 3"/>
<path d="M1540.0 494.0 L1630.0 391.6" fill="none" stroke="#b4b4b4" stroke-width="1.3" stroke-dasharray="3 3"/>
<path d="M1728.0 921.3 L1793.8 921.3 L1820.0 935.0" fill="none" stroke="#b4b4b4" stroke-width="1.3" stroke-dasharray="3 3"/>
<path d="M1740.0 830.0 L1760.0 845.0 L1790.0 850.0 L1810.0 870.0" fill="none" stroke="#b4b4b4" stroke-width="1.3" stroke-dasharray="3 3"/>
<path d="M1300.0 1060.0 L1330.0 1100.0 L1350.0 1120.0 L1380.0 1150.0" fill="none" stroke="#b4b4b4" stroke-width="1.3" stroke-dasharray="3 3"/>
<path d="M1370.0 1013.0 L1400.0 1060.0 L1410.0 1100.0 L1430.0 1150.0 L1470.0 1180.0" fill="none" stroke="#b4b4b4" stroke-width="1.3" stroke-dasharray="3 3"/>
<path d="M1420.0 1160.0 L1450.0 1170.0 L1470.0 1160.0 L1500.0 1150.0" fill="none" stroke="#b4b4b4" stroke-width="1.3" stroke-dasharray="3 3"/>
<path d="M1400.0 1200.0 L1440.0 1210.0 L1470.0 1230.0 L1510.0 1240.0" fill="none" stroke="#b4b4b4" stroke-width="1.3" stroke-dasharray="3 3"/>
<path d="M1545.0 1230.0 L1570.0 1250.0 L1600.0 1252.0 L1620.0 1250.0" fill="none" stroke="#b4b4b4" stroke-width="1.3" stroke-dasharray="3 3"/>
<path d="M1629.0 1183.0 L1627.0 1210.0 L1629.0 1245.7" fill="none" stroke="#b4b4b4" stroke-width="1.3" stroke-dasharray="3 3"/>
<path d="M1164.0 974.0 L1206.0 970.0 L1310.0 988.0 L1338.0 987.0 L1355.5 1005.5 L1438.0 1043.0 L1457.0 1069.6 L1470.0 1088.0 L1489.0 1096.0" fill="none" stroke="#a9a9a9" stroke-width="1.3"/>
<path d="M1541.0 616.5 L1573.7 625.6 L1588.3 632.9 L1621.0 634.7 L1641.2 626.5 L1701.3 659.3 L1715.9 678.5 L1723.2 687.6 L1739.6 696.7 L1745.0 735.0 L1743.2 751.4 L1767.0 769.6 L1798.0 756.0 L1830.0 748.0 L1845.0 740.0 L1870.0 715.0 L1930.0 708.0" fill="none" stroke="#a9a9a9" stroke-width="1.3"/>
<path d="M1592.0 1255.5 L1600.0 1245.7 L1629.0 1245.7" fill="none" stroke="#a9a9a9" stroke-width="1.3"/>
<path d="M1613.0 1314.0 L1627.0 1304.0 L1652.5 1314.0 L1672.0 1316.0 L1701.0 1298.4 L1728.7 1294.5" fill="none" stroke="#a9a9a9" stroke-width="1.3"/>
<path d="M1687.6 1361.0 L1700.0 1364.0 L1721.0 1366.8" fill="none" stroke="#a9a9a9" stroke-width="1.3"/>
</svg>
</div>
<div class="abs" style="left:0;top:0;width:2048px;height:1536px;z-index:2;pointer-events:none">
<div class="abs ml st" style="left:997.0px;top:459.7px">COLUMBIA</div>
<div class="abs ml ct" style="left:1068.4px;top:594.3px">Vancouver</div>
<div class="abs ml st" style="left:1062.9px;top:652.5px">WASHINGTON</div>
<div class="abs ml st" style="left:1076.4px;top:728.3px">OREGON</div>
<div class="abs ml st" style="left:1138.0px;top:817.6px">NEVADA</div>
<div class="abs ml ct" style="left:1080.8px;top:859.1px">San Francisco</div>
<div class="abs ml st" style="left:1077.0px;top:887.9px">CALIFORNIA</div>
<div class="abs ml ct" style="left:1042.5px;top:935.6px">Los Angeles</div>
<div class="abs ml ct" style="left:1077.0px;top:961.1px">San Diego</div>
<div class="abs ml ct" style="left:1202.5px;top:893.5px">Las Vegas</div>
<div class="abs ml st" style="left:1222.5px;top:933.4px">ARIZONA</div>
<div class="abs ml st" style="left:1303.0px;top:945.4px">NEW MEXICO</div>
<div class="abs ml st" style="left:1453.2px;top:904.4px">OKLAHOMA</div>
<div class="abs ml st" style="left:1442.2px;top:989.1px">TEXAS</div>
<div class="abs ml ct" style="left:1508.9px;top:962.4px">Dallas</div>
<div class="abs ml ct" style="left:1446.0px;top:1020.8px">Houston</div>
<div class="abs ml ct" style="left:1449.0px;top:1097.3px">Monterrey</div>
<div class="abs ml big" style="left:1363.6px;top:1125.8px">Mexico</div>
<div class="abs ml ct" style="left:1400.7px;top:1188.0px">Guadalajara</div>
<div class="abs ml ct" style="left:1469.0px;top:1209.3px">Mexico City</div>
<div class="abs ml wt" style="left:1590.5px;top:1097.5px">Gulf of</div>
<div class="abs ml wt" style="left:1585.0px;top:1113.5px">America</div>
<div class="abs ml ct2" style="left:1559.7px;top:1270.1px">Guatemala</div>
<div class="abs ml ct2" style="left:1651.5px;top:1321.9px">Nicaragua</div>
<div class="abs ml ct2" style="left:1663.2px;top:1372.3px">Costa Rica</div>
<div class="abs ml ct2" style="left:1743.6px;top:1396.5px">Panama</div>
<div class="abs ml wt" style="left:1813.6px;top:1295.9px">Caribbean Sea</div>
<div class="abs ml ct" style="left:1897.8px;top:1218.0px">Santo</div>
<div class="abs ml ct" style="left:1873.2px;top:1234.8px">Domingo</div>
<div class="abs ml ct" style="left:1750.0px;top:1144.2px">Havana</div>
<div class="abs ml ct2" style="left:1776.0px;top:1169.9px">Cuba</div>
<div class="abs ml ct" style="left:1785.0px;top:1094.9px">Miami</div>
<div class="abs ml st" style="left:1732.0px;top:1066.7px">FLORIDA</div>
<div class="abs ml st" style="left:1699.5px;top:986.7px">GEORGIA</div>
<div class="abs ml st" style="left:1749.2px;top:939.9px">SOUTH</div>
<div class="abs ml st" style="left:1737.5px;top:952.8px">CAROLINA</div>
<div class="abs ml st" style="left:1780.0px;top:899.4px">NORTH</div>
<div class="abs ml st" style="left:1762.0px;top:913.4px">CAROLINA</div>
<div class="abs ml st" style="left:1627.8px;top:904.2px">TENNESSEE</div>
<div class="abs ml st" style="left:1662.0px;top:874.3px">KENTUCKY</div>
<div class="abs ml st" style="left:1537.0px;top:925.6px">ARKANSAS</div>
<div class="abs ml st" style="left:1574.5px;top:945.7px">MISSISSIPPI</div>
<div class="abs ml st" style="left:1635.0px;top:969.7px">ALABAMA</div>
<div class="abs ml st" style="left:1548.0px;top:1009.1px">LOUISIANA</div>
<div class="abs ml st" style="left:1746.9px;top:840.3px">WEST</div>
<div class="abs ml st" style="left:1735.2px;top:853.9px">VIRGINIA</div>
<div class="abs ml st" style="left:1765.6px;top:873.1px">VIRGINIA</div>
<div class="abs ml st" style="left:1800.7px;top:795.2px">PENN</div>
<div class="abs ml st" style="left:1722.3px;top:800.3px">OHIO</div>
<div class="abs ml st" style="left:1649.4px;top:817.2px">INDIANA</div>
<div class="abs ml st" style="left:1593.8px;top:792.0px">ILLINOIS</div>
<div class="abs ml st" style="left:1541.0px;top:770.1px">IOWA</div>
<div class="abs ml st" style="left:1666.7px;top:728.2px">MICHIGAN</div>
<div class="abs ml st" style="left:1581.0px;top:707.2px">WISCONSIN</div>
<div class="abs ml st" style="left:1498.4px;top:672.6px">MINNESOTA</div>
<div class="abs ml ct" style="left:1502.3px;top:578.8px">Winnipeg</div>
<div class="abs ml st" style="left:1638.4px;top:537.9px">ONTARIO</div>
<div class="abs ml st" style="left:1867.0px;top:543.1px">QUEBEC</div>
<div class="abs ml ct" style="left:1812.5px;top:687.8px">Montreal</div>
<div class="abs ml ct" style="left:1806.4px;top:730.9px">Toronto</div>
<div class="abs ml st" style="left:1811.5px;top:750.2px">NEW YORK</div>
<div class="abs ml st" style="left:1894.6px;top:714.9px">VT</div>
<div class="abs ml ct" style="left:1887.5px;top:796.5px">New York</div>
<div class="abs ml ct" style="left:1843.5px;top:835.3px">Washington</div>
<div class="abs ml st" style="left:1893.4px;top:779.3px">CT RI</div>
<div class="abs ml ct" style="left:1663.5px;top:771.3px">Chicago</div>
<div class="abs ml st" style="left:1541.0px;top:852.4px">MISSOURI</div>
</div>
<svg class="abs" style="left:0;top:0;z-index:3" width="2048" height="1536" viewBox="0 0 2048 1536">
<defs><filter id="msh" x="-30%" y="-30%" width="160%" height="160%"><feDropShadow dx="0" dy="0.6" stdDeviation="1.1" flood-color="#000" flood-opacity="0.35"/></filter></defs>
<g filter="url(#msh)"><circle cx="1062" cy="601" r="17.3" fill="#fff"/>
<circle cx="1062" cy="601" r="12.2" fill="#fff" stroke="#a9a9a9" stroke-width="6.8"/></g>
<g filter="url(#msh)"><circle cx="1078" cy="637" r="17.3" fill="#fff"/>
<circle cx="1078" cy="637" r="12.2" fill="#fff" stroke="#a9a9a9" stroke-width="6.8"/></g>
<g filter="url(#msh)"><circle cx="1077" cy="651" r="17.3" fill="#fff"/>
<circle cx="1077" cy="651" r="12.2" fill="#fff" stroke="#a9a9a9" stroke-width="6.8"/></g>
<g filter="url(#msh)"><circle cx="1069" cy="696" r="17.3" fill="#fff"/>
<circle cx="1069" cy="696" r="12.2" fill="#fff" stroke="#5f5f5f" stroke-width="6.8"/></g>
<g filter="url(#msh)"><circle cx="1196" cy="901" r="17.3" fill="#fff"/>
<circle cx="1196" cy="901" r="12.2" fill="#fff" stroke="#a9a9a9" stroke-width="6.8"/></g>
<g filter="url(#msh)"><circle cx="1234" cy="917" r="17.3" fill="#fff"/>
<circle cx="1234" cy="917" r="12.2" fill="#fff" stroke="#a9a9a9" stroke-width="6.8"/></g>
<g filter="url(#msh)"><circle cx="1240" cy="953" r="17.3" fill="#fff"/>
<circle cx="1240" cy="953" r="12.2" fill="#fff" stroke="#a9a9a9" stroke-width="6.8"/></g>
<g filter="url(#msh)"><circle cx="1404" cy="984" r="17.3" fill="#fff"/>
<circle cx="1404" cy="984" r="12.2" fill="#fff" stroke="#5f5f5f" stroke-width="6.8"/></g>
<g filter="url(#msh)"><circle cx="1265" cy="1040" r="17.3" fill="#fff"/>
<circle cx="1265" cy="1040" r="12.2" fill="#fff" stroke="#a9a9a9" stroke-width="6.8"/></g>
<g filter="url(#msh)"><circle cx="1487" cy="914" r="17.3" fill="#fff"/>
<circle cx="1487" cy="914" r="12.2" fill="#fff" stroke="#a9a9a9" stroke-width="6.8"/></g>
<g filter="url(#msh)"><circle cx="1624" cy="691" r="17.3" fill="#fff"/>
<circle cx="1624" cy="691" r="12.2" fill="#fff" stroke="#5f5f5f" stroke-width="6.8"/></g>
<g filter="url(#msh)"><circle cx="1559" cy="708" r="17.3" fill="#fff"/>
<circle cx="1559" cy="708" r="12.2" fill="#fff" stroke="#a9a9a9" stroke-width="6.8"/></g>
<g filter="url(#msh)"><circle cx="1559" cy="737" r="17.3" fill="#fff"/>
<circle cx="1559" cy="737" r="12.2" fill="#fff" stroke="#a9a9a9" stroke-width="6.8"/></g>
<g filter="url(#msh)"><circle cx="1757" cy="682" r="17.3" fill="#fff"/>
<circle cx="1757" cy="682" r="12.2" fill="#fff" stroke="#a9a9a9" stroke-width="6.8"/></g>
<g filter="url(#msh)"><circle cx="1540" cy="840" r="17.3" fill="#fff"/>
<circle cx="1540" cy="840" r="12.2" fill="#fff" stroke="#a9a9a9" stroke-width="6.8"/></g>
<g filter="url(#msh)"><circle cx="1578" cy="841" r="17.3" fill="#fff"/>
<circle cx="1578" cy="841" r="12.2" fill="#fff" stroke="#5f5f5f" stroke-width="6.8"/></g>
<g filter="url(#msh)"><circle cx="1607" cy="857" r="17.3" fill="#fff"/>
<circle cx="1607" cy="857" r="12.2" fill="#fff" stroke="#5f5f5f" stroke-width="6.8"/></g>
<g filter="url(#msh)"><circle cx="1600" cy="924" r="17.3" fill="#fff"/>
<circle cx="1600" cy="924" r="12.2" fill="#fff" stroke="#a9a9a9" stroke-width="6.8"/></g>
<g filter="url(#msh)"><circle cx="1654" cy="927" r="17.3" fill="#fff"/>
<circle cx="1654" cy="927" r="12.2" fill="#fff" stroke="#5f5f5f" stroke-width="6.8"/></g>
<g filter="url(#msh)"><circle cx="1655" cy="961" r="17.3" fill="#fff"/>
<circle cx="1655" cy="961" r="12.2" fill="#fff" stroke="#5f5f5f" stroke-width="6.8"/></g>
<g filter="url(#msh)"><circle cx="1711" cy="955" r="17.3" fill="#fff"/>
<circle cx="1711" cy="955" r="12.2" fill="#fff" stroke="#5f5f5f" stroke-width="6.8"/></g>
<g filter="url(#msh)"><circle cx="1707" cy="948" r="17.3" fill="#fff"/>
<circle cx="1707" cy="948" r="12.2" fill="#fff" stroke="#a9a9a9" stroke-width="6.8"/></g>
<g filter="url(#msh)"><circle cx="1766" cy="979" r="17.3" fill="#fff"/>
<circle cx="1766" cy="979" r="12.2" fill="#fff" stroke="#5f5f5f" stroke-width="6.8"/></g>
<g filter="url(#msh)"><circle cx="1646" cy="1009" r="17.3" fill="#fff"/>
<circle cx="1646" cy="1009" r="12.2" fill="#fff" stroke="#5f5f5f" stroke-width="6.8"/></g>
<g filter="url(#msh)"><circle cx="1607" cy="1030" r="17.3" fill="#fff"/>
<circle cx="1607" cy="1030" r="12.2" fill="#fff" stroke="#5f5f5f" stroke-width="6.8"/></g>
<g filter="url(#msh)"><circle cx="1605" cy="1022" r="17.3" fill="#fff"/>
<circle cx="1605" cy="1022" r="12.2" fill="#fff" stroke="#5f5f5f" stroke-width="6.8"/></g>
<g filter="url(#msh)"><circle cx="1822" cy="845" r="17.3" fill="#fff"/>
<circle cx="1822" cy="845" r="12.2" fill="#fff" stroke="#a9a9a9" stroke-width="6.8"/></g>
<g filter="url(#msh)"><circle cx="1827" cy="842" r="17.3" fill="#fff"/>
<circle cx="1827" cy="842" r="12.2" fill="#fff" stroke="#a9a9a9" stroke-width="6.8"/></g>
<g filter="url(#msh)"><circle cx="1798" cy="860" r="17.3" fill="#fff"/>
<circle cx="1798" cy="860" r="12.2" fill="#fff" stroke="#5f5f5f" stroke-width="6.8"/></g>
<g filter="url(#msh)"><circle cx="1823" cy="869" r="17.3" fill="#fff"/>
<circle cx="1823" cy="869" r="12.2" fill="#fff" stroke="#a9a9a9" stroke-width="6.8"/></g>
<g filter="url(#msh)"><circle cx="1788" cy="895" r="17.3" fill="#fff"/>
<circle cx="1788" cy="895" r="12.2" fill="#fff" stroke="#5f5f5f" stroke-width="6.8"/></g>
<g filter="url(#msh)"><circle cx="1782" cy="902" r="17.3" fill="#fff"/>
<circle cx="1782" cy="902" r="12.2" fill="#fff" stroke="#5f5f5f" stroke-width="6.8"/></g>
<g filter="url(#msh)"><circle cx="1798" cy="922" r="17.3" fill="#fff"/>
<circle cx="1798" cy="922" r="12.2" fill="#fff" stroke="#5f5f5f" stroke-width="6.8"/></g>
</svg>
<div class="abs" style="left:0;top:0;width:2048px;height:1536px;z-index:3">
<div class="abs clus" style="left:1033.0px;top:820px;width:80px">130</div>
<div class="abs clus" style="left:1123.0px;top:924px;width:62px">14</div>
<div class="abs clus" style="left:1472.0px;top:950px;width:62px">21</div>
<div class="abs clus" style="left:1383.5px;top:1168px;width:59px">11</div>
<div class="abs clus" style="left:1614.0px;top:746px;width:62px">14</div>
<div class="abs clus" style="left:1707.0px;top:751px;width:62px">18</div>
<div class="abs clus" style="left:1753.0px;top:707px;width:80px">162</div>
<div class="abs clus" style="left:1854.0px;top:738px;width:62px">18</div>
<div class="abs clus" style="left:1644.0px;top:843px;width:62px">21</div>
<div class="abs clus" style="left:1710.0px;top:1020px;width:62px">15</div>
</div>
<!-- MAP UI -->
<div class="abs" style="left:966px;top:369px;width:994px;height:10px;background:linear-gradient(rgba(0,0,0,0.13),rgba(0,0,0,0));z-index:4"></div>
<div class="abs" style="left:1002px;top:404px;width:170px;height:52px;background:#fff;border-radius:4px;box-shadow:0 1px 3px rgba(0,0,0,0.25);z-index:10"></div>
<svg class="abs" style="left:0;top:0;z-index:11" width="2048" height="1536" viewBox="0 0 2048 1536">
  <g fill="none" stroke="#555" stroke-width="2" stroke-linecap="round">
    <circle cx="1027" cy="428" r="8.2"/><path d="M1033 434 L1038.5 439.5"/>
  </g>
</svg>
<div class="abs t20" style="left:1056px;top:418px;color:#707070;z-index:11">Location</div>
<!-- controls -->
<div class="abs mctl" style="left:1890px;top:386px;width:53px;height:53px;"></div>
<div class="abs mctl" style="left:1890px;top:456px;width:53px;height:106px;"></div>
<div class="abs mctl" style="left:1890px;top:579px;width:53px;height:106px;"></div>
<svg class="abs" style="left:0;top:0;z-index:11" width="2048" height="1536" viewBox="0 0 2048 1536">
  <rect x="1890" y="509" width="53" height="1" fill="#e8e8e8"/>
  <rect x="1890" y="632" width="53" height="1" fill="#e8e8e8"/>
  <g fill="none" stroke="#555" stroke-width="1.8" stroke-linejoin="round" stroke-linecap="round">
    <path d="M1916.5 402 L1926.5 408 L1916.5 414 L1906.5 408 Z"/>
    <path d="M1906.5 412 L1916.5 418 L1926.5 412"/>
    <path d="M1906.5 416 L1916.5 422 L1926.5 416"/>
  </g>
  <g fill="none" stroke="#444" stroke-width="2">
    <path d="M1916.5 471 L1916.5 494 M1905 482.5 L1928 482.5"/>
    <path d="M1905 536 L1928 536"/>
    <path d="M1906 601 L1906 596 L1911 596 M1922 596 L1927 596 L1927 601 M1927 612 L1927 617 L1922 617 M1911 617 L1906 617 L1906 612"/>
  </g>
  <g fill="#f4b400">
    <circle cx="1916" cy="652" r="4.5"/>
    <path d="M1909 658 L1923 658 L1924 670 L1921 670 L1920 682 L1917 682 L1916 674 L1915 682 L1912 682 L1911 670 L1908 670 Z"/>
  </g>
</svg>
<!-- feedback tab -->
<div class="abs" style="left:1923px;top:658px;width:37px;height:204.7px;background:#0a56c8;z-index:12"></div>
<div class="abs" style="left:1925.5px;top:676px;width:35px;height:168.5px;background:#3a6dd8;border-radius:10px 0 0 10px;z-index:12"></div>
<div class="abs" style="left:1867px;top:746px;width:170px;height:30px;transform:rotate(-90deg);text-align:center;color:#fff;font:bold 20px 'Liberation Sans',sans-serif;z-index:13;line-height:30px">Feedback</div>
<!-- tooltips -->
<div class="abs tip" style="left:1180px;top:977px;width:121px;">Ashley AG</div>
<div class="abs tip" style="left:1338px;top:1008px;width:133px;">935300062</div>
<div class="abs tip" style="left:1184px;top:1064px;width:163px;">Rebeca's Asset</div>
<!-- legend -->
<div class="abs" style="left:1845px;top:1361px;width:98px;height:53px;background:#fff;border-radius:5px;box-shadow:0 1px 3px rgba(0,0,0,0.3);z-index:11;font:19px 'Liberation Sans',sans-serif;color:#222;text-align:center;line-height:53px">Legend</div>
<!-- attribution -->
<div class="abs" style="left:1541px;top:1430px;width:419px;height:18px;background:rgba(245,245,245,0.8);z-index:11"></div>
<div class="abs attr" style="left:1549px;top:1430px;">Keyboard shortcuts</div>
<div class="abs attr" style="left:1695px;top:1430px;">Map data ©2026 Google, INEGI</div>
<div class="abs attr" style="left:1911px;top:1430px;">Terms</div>
<div class="abs" style="left:980px;top:1413px;font:bold 26px 'Liberation Sans',sans-serif;color:#fff;-webkit-text-stroke:1.5px #6b6b6b;z-index:11;letter-spacing:-1px">Google</div>
<!-- list scrollbar -->
<svg class="abs" style="left:0;top:0;z-index:4" width="2048" height="1536" viewBox="0 0 2048 1536">
  <rect x="944" y="369" width="22" height="1079" fill="#fafafa"/>
  <rect x="965.5" y="369" width="1.2" height="1079" fill="#c6c6c6"/>
  <path d="M947.5 388 L954.5 377.5 L961.5 388 Z" fill="#7a7a7a"/>
  <rect x="949" y="396" width="12" height="25" rx="6" fill="#7a7a7a"/>
  <path d="M947.5 1432 L954.5 1442.5 L961.5 1432 Z" fill="#7a7a7a"/>
</svg>

<!-- DROPDOWN -->
<div class="abs" style="left:1153px;top:339px;width:387px;height:521px;background:#fff;border-radius:6px;box-shadow:0 2px 8px rgba(0,0,0,0.18);z-index:20;"></div>
<svg class="abs" style="left:0;top:0;z-index:21" width="2048" height="1536" viewBox="0 0 2048 1536">
  <rect x="1176.5" y="363.5" width="339" height="51" rx="4" fill="#fff" stroke="#d2d2d2"/>
  <rect x="1176.5" y="433.5" width="339" height="51" rx="4" fill="#e5f2fd" stroke="#b4c6d8"/>
  <rect x="1176.5" y="714.5" width="339" height="51" rx="4" fill="#fff" stroke="#d2d2d2"/>
  <rect x="1176.5" y="785.5" width="339" height="51" rx="4" fill="#fff" stroke="#d2d2d2"/>
  <g fill="none" stroke="#555" stroke-width="2" stroke-linecap="round" stroke-linejoin="round">
    <circle cx="1202" cy="387" r="8.2"/><path d="M1208 393 L1213.5 398.5"/>
    <path d="M1482 457 L1489 464 L1496 457" stroke="#444" stroke-width="1.7"/>
    <path d="M1482 738 L1489 745 L1496 738" stroke="#444" stroke-width="1.7"/>
  </g>
</svg>
<div class="abs" style="left:1176px;top:491px;width:351px;height:222px;background:#fff;border-radius:6px;box-shadow:0 2px 7px rgba(0,0,0,0.18);z-index:22;overflow:hidden">
  <div class="abs" style="left:0;top:112px;width:351px;height:52px;background:#f1f1f1"></div>
  <div class="abs" style="left:0;top:172px;width:351px;height:50px;background:#fafafa;border-top:1px solid #eee"></div>
</div>
<svg class="abs" style="left:0;top:0;z-index:23" width="2048" height="1536" viewBox="0 0 2048 1536">
  <rect x="1191.5" y="512.5" width="23" height="23" rx="2.5" fill="#fff" stroke="#cfcfcf"/>
  <rect x="1191.5" y="565.5" width="23" height="23" rx="2.5" fill="#fff" stroke="#cfcfcf"/>
  <rect x="1191" y="618" width="24" height="23.5" rx="2.5" fill="#0874e4"/>
  <path d="M1196 630.5 L1200.3 634.8 L1210 624.5" fill="none" stroke="#fff" stroke-width="1.8" stroke-linecap="round" stroke-linejoin="round"/>
  <rect x="1168.9" y="593.9" width="355" height="69" rx="13" fill="none" stroke="#fdb921" stroke-width="5.9"/>
  <circle cx="1311.5" cy="689.5" r="1.3" fill="#aaa"/>
</svg>
<div class="abs t20" style="left:1230px;top:377px;color:#777;z-index:24">Assets</div>
<div class="abs t20" style="left:1195px;top:447px;color:#333;z-index:24">Assets</div>
<div class="abs t20" style="left:1229px;top:512px;color:#333;z-index:24">Drivers</div>
<div class="abs t20" style="left:1229px;top:565px;color:#333;z-index:24">Vehicles</div>
<div class="abs t20" style="left:1229px;top:617px;color:#333;z-index:24">Assets</div>
<div class="abs t20" style="left:1194px;top:677px;color:#333;z-index:24">1 Selected</div>
<div class="abs t20" style="left:1327px;top:677px;color:#1a6fd6;z-index:24">Clear</div>
<div class="abs t20" style="left:1195px;top:728px;color:#555;z-index:24">PTO</div>
<div class="abs t20" style="left:1176px;top:799px;width:340px;text-align:center;color:#555;z-index:24">MIL</div>
<!-- list highlight -->
<svg class="abs" style="left:0;top:0;z-index:4" width="2048" height="1536" viewBox="0 0 2048 1536">
  <rect x="393.5" y="504.3" width="532.2" height="111.5" rx="14" fill="none" stroke="#fdb921" stroke-width="5.5"/>
</svg>

</div>
</body></html>
